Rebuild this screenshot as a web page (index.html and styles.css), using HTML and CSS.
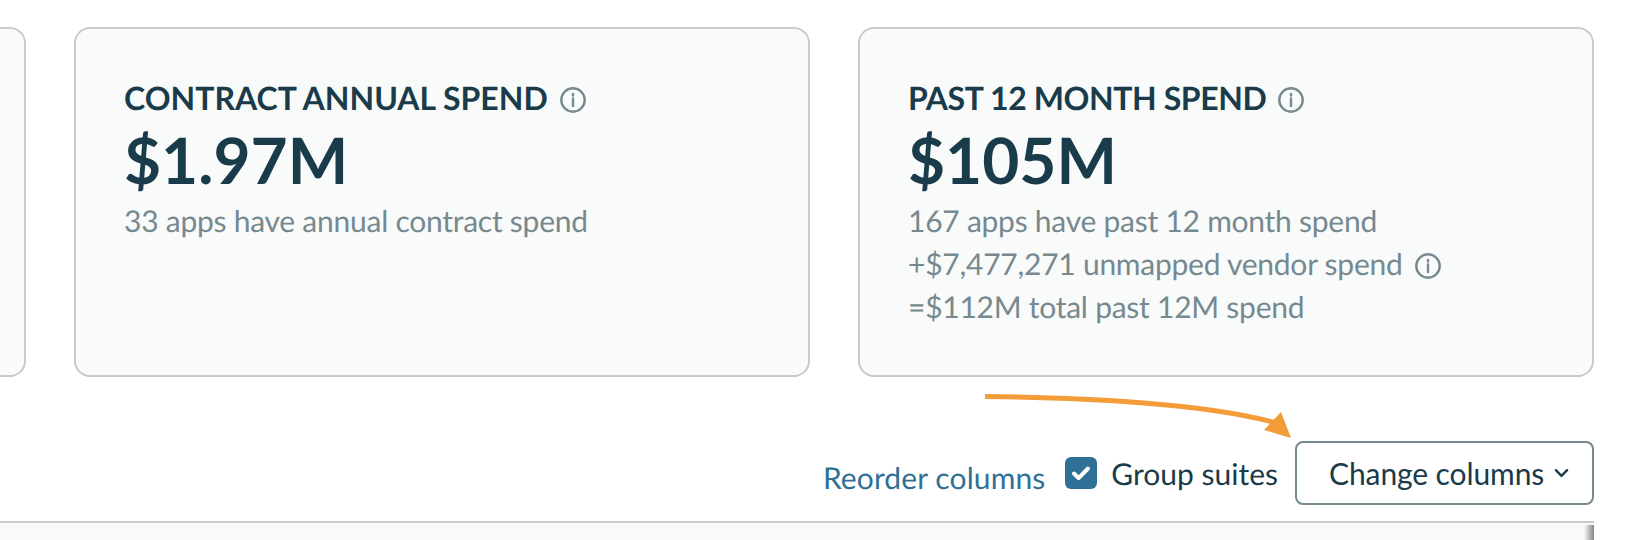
FILE: index.html
```html
<!DOCTYPE html>
<html lang="en">
<head>
<meta charset="utf-8">
<title>Spend summary</title>
<link rel="stylesheet" href="styles.css">
</head>
<body>
<main class="page">
  <section class="cards">
    <article class="card"></article>
    <article class="card">
      <h2 class="card-title card-title-open">CONTRACT ANNUAL SPEND
        <svg class="info" viewBox="0 0 26 26"><circle cx="13" cy="13" r="11.7"/><path d="M13 11.500v7.500M13 7v1.600"/></svg>
      </h2>
      <div class="card-value">$1.97M</div>
      <p class="card-note">33 apps have annual contract spend</p>
    </article>
    <article class="card">
      <h2 class="card-title">PAST 12 MONTH SPEND
        <svg class="info" viewBox="0 0 26 26"><circle cx="13" cy="13" r="11.7"/><path d="M13 11.500v7.500M13 7v1.600"/></svg>
      </h2>
      <div class="card-value">$105M</div>
      <p class="card-note">167 apps have past 12 month spend</p>
      <p class="card-note">+$7,477,271 unmapped vendor spend
        <svg class="info" viewBox="0 0 26 26"><circle cx="13" cy="13" r="11.7"/><path d="M13 11.500v7.500M13 7v1.600"/></svg>
      </p>
      <p class="card-note">=$112M total past 12M spend</p>
    </article>
  </section>
  <section class="toolbar">
    <a class="reorder" href="#">Reorder columns</a>
    <label class="suites">
      <span class="checkbox"><svg viewBox="0 0 32 32"><path d="M9 16.500l4.600 4.600L23 11.500"/></svg></span>
      <span class="suites-text">Group suites</span>
    </label>
    <button class="columns" type="button">Change columns
      <svg class="chevron" viewBox="0 0 16 10"><path d="M2 2l6 6 6-6"/></svg>
    </button>
  </section>
  <section class="table-head"></section>
  <svg class="arrow" viewBox="0 0 1644 540">
    <path class="arrow-line" d="M985 396.500C1090 398 1200 403 1273 422"/>
    <path class="arrow-tip" d="M1281 412L1291 438L1264 430Z"/>
  </svg>
</main>
</body>
</html>
```
FILE: styles.css
```css
* { box-sizing: border-box; }
html, body { margin: 0; height: 100%; background: #fff; overflow: hidden; }
body { font-family: Lato, "Open Sans", sans-serif; color: #1a3b4a; text-rendering: geometricPrecision; }
.page { position: relative; width: 1644px; height: 540px; padding-top: 27px; overflow: hidden; }

.cards { display: grid; grid-template-columns: repeat(3, 736px); gap: 48px; margin-left: -710px; height: 350px; }
.card { background: #f9fafa; border: 2px solid #c9cbcb; border-radius: 16px; padding: 49px 48px 0; }
.card-title { margin: 0; font-size: 32px; line-height: 40px; font-weight: 700; letter-spacing: -0.4px; display: flex; align-items: center; gap: 12px; }
.card-title-open { letter-spacing: 0; }
.card-value { margin-top: 1px; font-size: 64px; line-height: 81px; font-weight: 700; }
.card-note { margin: 0; font-size: 30px; line-height: 43px; letter-spacing: -0.25px; color: #76898f; display: flex; align-items: center; gap: 12px; }
.info { width: 26px; height: 26px; flex: none; margin-top: 3px; fill: none; stroke: #76898f; stroke-width: 2.400; stroke-linecap: round; }

.toolbar { display: flex; justify-content: flex-end; align-items: center; height: 64px; margin-top: 64px; padding-right: 50px; }
.reorder { color: #2f7096; text-decoration: none; font-size: 30px; line-height: 40px; margin-top: 10px; margin-right: 20px; letter-spacing: 0.1px; }
.suites { display: flex; align-items: center; gap: 14px; font-size: 30px; margin-right: 17px; }
.suites-text { margin-top: 2px; }
.checkbox { width: 32px; height: 32px; background: #2f7096; border-radius: 6px; display: block; }
.checkbox svg { display: block; fill: none; stroke: #fff; stroke-width: 4; stroke-linecap: round; stroke-linejoin: round; }
.columns { width: 299px; height: 64px; background: #fff; border: 2px solid #76898f; border-radius: 8px; font: inherit; font-size: 30px; letter-spacing: -0.1px; color: #1a3b4a; padding: 0 0 0 32px; display: flex; align-items: center; gap: 10px; }
.chevron { width: 15px; height: 10px; fill: none; stroke: #1a3b4a; stroke-width: 2.500; stroke-linecap: round; stroke-linejoin: round; }

.table-head { position: relative; width: 1594px; height: 40px; margin-top: 16px; background: #f8faf9; border-top: 2px solid #c9cbcb; }
.table-head::after { content: ""; position: absolute; right: 0; top: 2px; bottom: 0; width: 10px; background: linear-gradient(to right, rgba(120,120,120,0), rgba(120,120,120,.9)); }
.arrow { position: absolute; left: 0; top: 0; width: 1644px; height: 540px; pointer-events: none; }
.arrow-line { fill: none; stroke: #f39c38; stroke-width: 5; }
.arrow-tip { fill: #f39c38; }
```
